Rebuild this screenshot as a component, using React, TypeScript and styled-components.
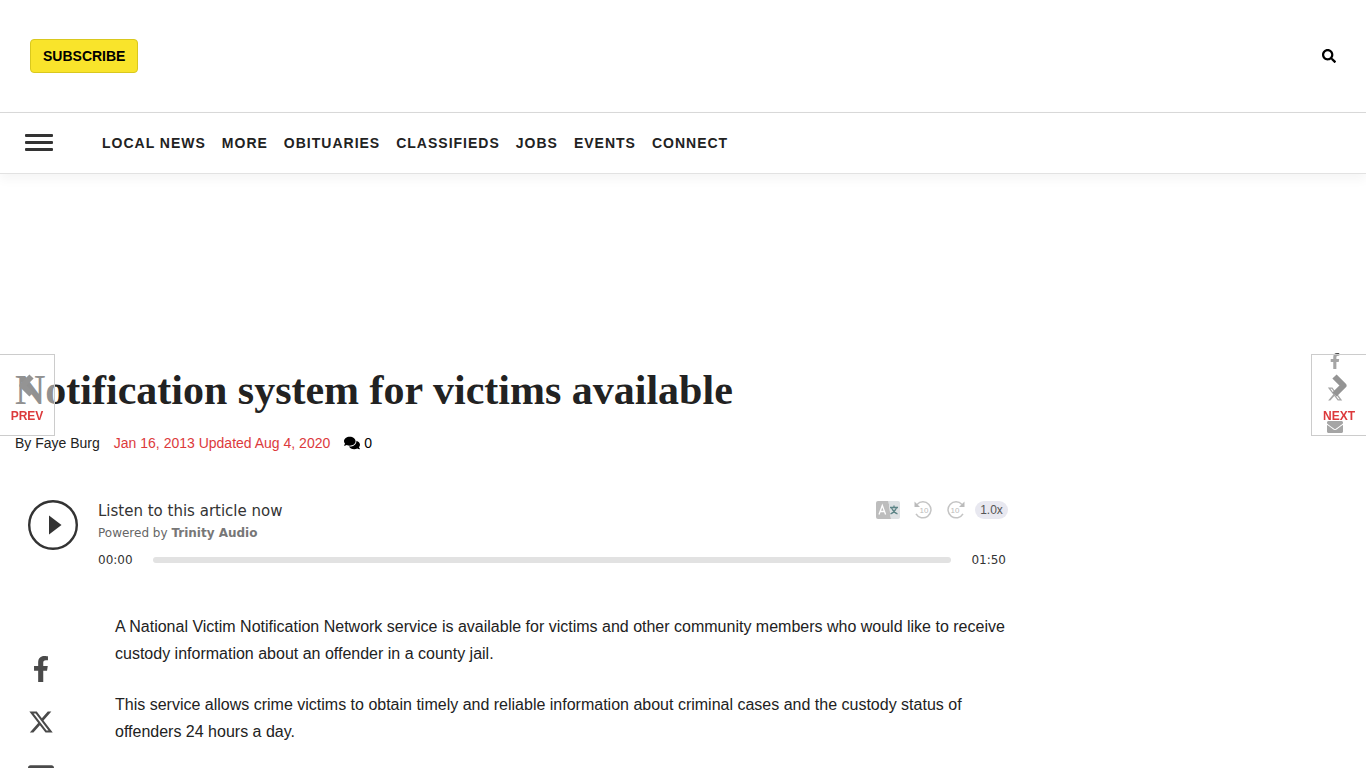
import React from 'react';
import styled, { createGlobalStyle } from 'styled-components';
import { FaSearch, FaComments, FaFacebookF, FaEnvelope } from 'react-icons/fa';
import { FaXTwitter } from 'react-icons/fa6';

const GlobalStyle = createGlobalStyle`
  * { box-sizing: border-box; }
  body {
    margin: 0;
    background: #fff;
    color: #222;
    font-family: "Liberation Sans", Arial, sans-serif;
    overflow-x: hidden;
  }
  a { color: inherit; text-decoration: none; }
  button { font: inherit; color: inherit; cursor: pointer; }
`;

const Masthead = styled.header`
  display: flex;
  align-items: center;
  justify-content: space-between;
  height: 112px;
  padding: 0 30px;
`;

const SubscribeLink = styled.a`
  padding: 0 12px;
  border: 1px solid #d9c81e;
  border-radius: 4px;
  background: #f9e42b;
  color: #000;
  font-size: 14px;
  font-weight: 700;
  line-height: 32px;
`;

const IconButton = styled.button`
  display: flex;
  padding: 0;
  border: 0;
  background: none;
  color: #000;
`;

const NavBar = styled.nav`
  display: flex;
  align-items: center;
  height: 62px;
  padding: 0 25px;
  border-top: 1px solid #d8d8d8;
  border-bottom: 1px solid #e2e2e2;
  box-shadow: 0 6px 10px rgba(0, 0, 0, 0.04);
`;

const MenuButton = styled.button`
  display: flex;
  flex-direction: column;
  gap: 4px;
  width: 28px;
  margin-right: 49px;
  padding: 0 0 2px;
  border: 0;
  background: none;
`;

const MenuBar = styled.span`
  height: 3px;
  border-radius: 1px;
  background: #333;
`;

const NavList = styled.ul`
  display: flex;
  gap: 16px;
  margin: 0;
  padding: 0;
  list-style: none;
  font-size: 14px;
  font-weight: 700;
  letter-spacing: 1px;
  line-height: 20px;
`;

const Main = styled.main`
  padding: 188px 15px 40px;
`;

const Title = styled.h1`
  margin: 0;
  font-family: "Liberation Serif", "Times New Roman", serif;
  font-size: 42px;
  font-weight: 700;
  line-height: 56px;
`;

const Meta = styled.div`
  display: flex;
  gap: 14px;
  margin-top: 15px;
  font-size: 14px;
  line-height: 20px;
`;

const DateText = styled.span`
  color: #dc3a3c;
`;

const Comments = styled.a`
  display: flex;
  align-items: center;
  gap: 4px;
  color: #000;
`;

const Column = styled.div`
  width: 75%;
  max-width: 993px;
`;

const Player = styled.section`
  display: flex;
  align-items: flex-start;
  gap: 20px;
  margin-top: 47px;
  padding-left: 13px;
  color: #333;
  font-family: "DejaVu Sans", Verdana, sans-serif;
`;

const PlayButton = styled(IconButton)`
  color: #333;
`;

const PlayerBody = styled.div`
  flex: 1;
`;

const PlayerTop = styled.div`
  display: flex;
  justify-content: space-between;
`;

const Listen = styled.div`
  font-size: 15px;
  line-height: 22px;
`;

const Powered = styled.div`
  color: #666;
  font-size: 12px;
  line-height: 22px;

  a { color: #777; font-weight: 700; }
`;

const Tools = styled.div`
  display: flex;
  align-items: center;
  gap: 13px;
  height: 20px;
`;

const SpeedButton = styled.button`
  width: 33px;
  height: 18px;
  margin-left: -4px;
  padding: 0;
  border: 0;
  border-radius: 9px;
  background: #e8e8f0;
  color: #555;
  font-family: "Liberation Sans", Arial, sans-serif;
  font-size: 12px;
  line-height: 18px;
`;

const Timeline = styled.div`
  display: flex;
  align-items: center;
  gap: 20px;
  margin-top: 6px;
  padding-right: 2px;
  font-size: 12px;
  line-height: 20px;
`;

const Seek = styled.input`
  flex: 1;
  min-width: 0;
  height: 6px;
  margin: 0;
  appearance: none;
  border-radius: 3px;
  background: #e2e2e2;

  &::-webkit-slider-thumb { appearance: none; width: 0; height: 0; }
`;

const ArticleRow = styled.div`
  display: flex;
  margin-top: 43px;
`;

const ShareRail = styled.div`
  display: flex;
  flex-direction: column;
  align-items: center;
  gap: 27px;
  width: 52px;
  margin-right: 48px;
  padding-top: 43px;
  color: #4a4a4a;

  a { display: flex; }
`;

const Story = styled.div`
  flex: 1;
  font-size: 16px;
  line-height: 27px;

  p { margin: 0 0 24px; }
`;

const Pager = styled.a<{ $side: 'left' | 'right' }>`
  position: fixed;
  top: calc(50% - 30px);
  ${(p) => p.$side}: 0;
  display: flex;
  flex-direction: column;
  align-items: center;
  gap: 9px;
  width: 55px;
  height: 82px;
  padding-top: 17px;
  border: 1px solid #ccc;
  border-${(p) => p.$side}: 0;
  background: rgba(255, 255, 255, 0.5);
  color: #dc3a3c;
  font-size: 12px;
  font-weight: 700;
  line-height: 14px;
`;

const FloatingShare = styled.div`
  position: fixed;
  top: calc(50% - 31px);
  right: 23px;
  display: flex;
  flex-direction: column;
  align-items: center;
  gap: 17px;
  width: 16px;
  color: #4a4a4a;

  a { display: flex; }
`;

const navItems = ['Local News', 'More', 'Obituaries', 'Classifieds', 'Jobs', 'Events', 'Connect'];

function Chevron({ left = false }: { left?: boolean }) {
  return (
    <svg width="18" height="28" viewBox="0 0 18 28" aria-hidden="true">
      <path
        d={left ? 'M13.500 4.500 4.500 13.500 13.500 22.500' : 'M4.500 4.500 13.500 13.500 4.500 22.500'}
        fill="none"
        stroke="#949494"
        strokeWidth="6"
        strokeLinejoin="round"
      />
    </svg>
  );
}

function Translate() {
  return (
    <svg width="24" height="20" viewBox="0 0 24 20" aria-hidden="true">
      <path d="M2 1h10.500l2.500 18H2a2 2 0 0 1-2-2V3a2 2 0 0 1 2-2z" fill="#bdbdbd" />
      <path d="M12.500 1H22a2 2 0 0 1 2 2v14a2 2 0 0 1-2 2h-7z" fill="#dde1e3" />
      <path d="M3 14.500 6.300 5.500 9.600 14.500M4.200 11.500h4.200" fill="none" stroke="#fff" strokeWidth="1.300" />
      <path d="M14 7.500h8M18 5.500v2M15.500 7.500q1.500 4.500 6 6.500M20.500 7.500q-1.500 4.500-6 6.500" fill="none" stroke="#5d8587" strokeWidth="1.300" />
    </svg>
  );
}

function Skip({ forward = false }: { forward?: boolean }) {
  return (
    <svg width="20" height="20" viewBox="0 0 20 20" aria-hidden="true">
      <g transform={forward ? 'translate(20 0) scale(-1 1)' : undefined}>
        <path d="M4 4.500A8 8 0 1 1 3 13.800" fill="none" stroke="#c4c4c4" strokeWidth="1.500" />
        <path d="M1.500 1.500v5.500h5.500z" fill="#bbb" />
      </g>
      <text x={forward ? 9 : 11} y="13" textAnchor="middle" fontSize="8" fill="#bbb" fontFamily="Liberation Sans, sans-serif">10</text>
    </svg>
  );
}

export default function App() {
  return (
    <>
      <GlobalStyle />
      <Masthead>
        <SubscribeLink href="#subscribe">SUBSCRIBE</SubscribeLink>
        <IconButton aria-label="Search"><FaSearch size={14} /></IconButton>
      </Masthead>
      <NavBar>
        <MenuButton aria-label="Menu"><MenuBar /><MenuBar /><MenuBar /></MenuButton>
        <NavList>
          {navItems.map((item) => (
            <li key={item}><a href="#section">{item.toUpperCase()}</a></li>
          ))}
        </NavList>
      </NavBar>
      <Main>
        <Title>Notification system for victims available</Title>
        <Meta>
          <span>By Faye Burg</span>
          <DateText>Jan 16, 2013 Updated Aug 4, 2020</DateText>
          <Comments href="#comments"><FaComments size={16} />0</Comments>
        </Meta>
        <Column>
          <Player aria-label="Audio player">
            <PlayButton aria-label="Play">
              <svg width="50" height="50" viewBox="0 0 50 50">
                <circle cx="25" cy="25" r="23.800" fill="none" stroke="currentColor" strokeWidth="2.400" />
                <path d="M21 15.500v19L33.500 25z" fill="currentColor" />
              </svg>
            </PlayButton>
            <PlayerBody>
              <PlayerTop>
                <div>
                  <Listen>Listen to this article now</Listen>
                  <Powered>Powered by <a href="#trinity">Trinity Audio</a></Powered>
                </div>
                <Tools>
                  <IconButton aria-label="Translate"><Translate /></IconButton>
                  <IconButton aria-label="Back 10 seconds"><Skip /></IconButton>
                  <IconButton aria-label="Forward 10 seconds"><Skip forward /></IconButton>
                  <SpeedButton>1.0x</SpeedButton>
                </Tools>
              </PlayerTop>
              <Timeline>
                <span>00:00</span>
                <Seek type="range" aria-label="Position" min={0} max={110} defaultValue={0} />
                <span>01:50</span>
              </Timeline>
            </PlayerBody>
          </Player>
          <ArticleRow>
            <ShareRail>
              <a href="#facebook" aria-label="Facebook"><FaFacebookF size={26} /></a>
              <a href="#x" aria-label="X"><FaXTwitter size={26} /></a>
              <a href="#email" aria-label="Email"><FaEnvelope size={26} /></a>
            </ShareRail>
            <Story>
              <p>A National Victim Notification Network service is available for victims and other community members who would like to receive custody information about an offender in a county jail.</p>
              <p>This service allows crime victims to obtain timely and reliable information about criminal cases and the custody status of offenders 24 hours a day.</p>
            </Story>
          </ArticleRow>
        </Column>
      </Main>
      <FloatingShare>
        <a href="#facebook" aria-label="Facebook"><FaFacebookF size={16} /></a>
        <a href="#x" aria-label="X"><FaXTwitter size={16} /></a>
        <a href="#email" aria-label="Email"><FaEnvelope size={16} /></a>
      </FloatingShare>
      <Pager $side="left" href="#prev"><Chevron left />PREV</Pager>
      <Pager $side="right" href="#next"><Chevron />NEXT</Pager>
    </>
  );
}
